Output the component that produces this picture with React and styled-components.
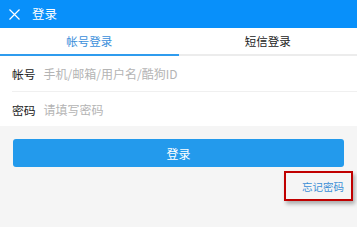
import React from "react";
import styled, { createGlobalStyle } from "styled-components";

const Global = createGlobalStyle`
  html, body { margin: 0; padding: 0; background: #f5f5f5; }
  body { font-family: "Noto Sans CJK SC", "Noto Sans", sans-serif; }
`;

const Page = styled.div`
  width: 357px;
  height: 227px;
  background: #f5f5f5;
  overflow: hidden;
`;

const Header = styled.div`
  height: 28px;
  background: #0890fa;
  display: flex;
  align-items: center;
  padding-left: 9px;
  gap: 12px;
  color: #fff;
`;

const Title = styled.span`
  font-size: 12.5px;
  line-height: 1;
`;

const Tabs = styled.div`
  display: flex;
  background: #fff;
`;

const Tab = styled.div`
  flex: 1;
  height: 26px;
  display: flex;
  align-items: center;
  justify-content: center;
  font-size: 11.5px;
  color: ${(p) => (p.$active ? "#3b8fdb" : "#222")};
  border-bottom: 2px solid ${(p) => (p.$active ? "#2f9cee" : "#ececec")};
`;

const Form = styled.div`
  background: #fff;
`;

const Row = styled.div`
  height: ${(p) => p.$h}px;
  margin-left: 12px;
  display: flex;
  align-items: center;
  gap: 8px;
  border-bottom: ${(p) => (p.$line ? "1px solid #f0f0f0" : "none")};
`;

const Label = styled.span`
  font-size: 11.8px;
  color: #222;
`;

const Placeholder = styled.span`
  font-size: 12px;
  color: #b4b4b4;
`;

const Button = styled.div`
  margin: 13px 13px 0 13px;
  height: 28px;
  border-radius: 3px;
  background: #239aec;
  color: #fff;
  font-size: 12px;
  display: flex;
  align-items: center;
  justify-content: center;
`;

const Footer = styled.div`
  display: flex;
  justify-content: flex-end;
  padding-right: 4px;
  margin-top: 4px;
`;

const Forgot = styled.div`
  box-sizing: content-box;
  width: 58px;
  height: 26px;
  padding-right: 7px;
  border: 2px solid #c00000;
  box-shadow: 2px 3px 4px rgba(0, 0, 0, 0.3);
  display: flex;
  align-items: center;
  justify-content: flex-end;
  font-size: 10.5px;
  color: #3a8ed6;
`;

const CloseIcon = () => (
  <svg width="11" height="11" viewBox="0 0 11 11">
    <path d="M0.5 0.5 L10.5 10.5 M10.5 0.5 L0.5 10.5" stroke="#fff" strokeWidth="1.2" />
  </svg>
);

export default function App() {
  return (
    <Page>
      <Global />
      <Header>
        <CloseIcon />
        <Title>登录</Title>
      </Header>
      <Tabs>
        <Tab $active>帐号登录</Tab>
        <Tab>短信登录</Tab>
      </Tabs>
      <Form>
        <Row $h={35} $line>
          <Label>帐号</Label>
          <Placeholder>手机/邮箱/用户名/酷狗ID</Placeholder>
        </Row>
        <Row $h={34}>
          <Label>密码</Label>
          <Placeholder>请填写密码</Placeholder>
        </Row>
      </Form>
      <Button>登录</Button>
      <Footer>
        <Forgot>忘记密码</Forgot>
      </Footer>
    </Page>
  );
}
